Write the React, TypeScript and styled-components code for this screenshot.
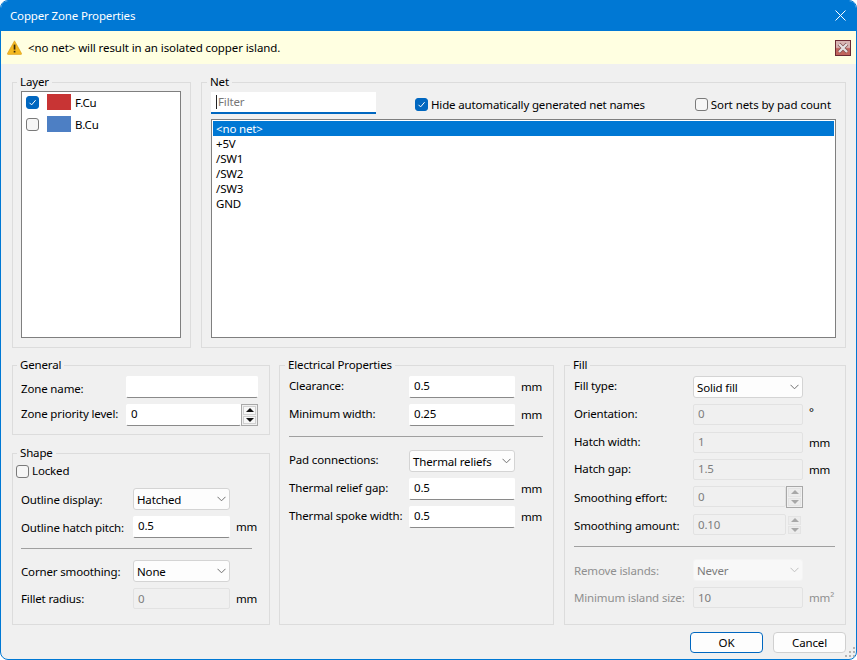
import styled, { createGlobalStyle } from "styled-components";

const NETS = ["<no net>", "+5V", "/SW1", "/SW2", "/SW3", "GND"];

const LAYERS = [
  { id: "F.Cu", color: "#c83434", checked: true },
  { id: "B.Cu", color: "#4d7fc4", checked: false },
];

const GlobalStyle = createGlobalStyle`
  html, body {
    margin: 0;
    background: #fff;
  }
  * {
    box-sizing: border-box;
  }
`;

function Check({ checked }: { checked?: boolean }) {
  return (
    <CheckBox $checked={checked}>
      {checked && (
        <svg width="9" height="9" viewBox="0 0 9 9">
          <path d="M1.5 4.8 L3.6 6.9 L7.6 2.2" fill="none" stroke="#fff" strokeWidth="1" />
        </svg>
      )}
    </CheckBox>
  );
}

function Chevron({ disabled }: { disabled?: boolean }) {
  return (
    <svg width="9" height="6" viewBox="0 0 9 6">
      <path d="M0.5 0.8 L4.5 4.8 L8.5 0.8" fill="none" stroke={disabled ? "#c0c0c0" : "#707070"} strokeWidth="1" />
    </svg>
  );
}

function Dropdown({ value, disabled }: { value: string; disabled?: boolean }) {
  return (
    <Select $disabled={disabled}>
      <span>{value}</span>
      <Chevron disabled={disabled} />
    </Select>
  );
}

function Spinner({ disabled, outlined }: { disabled?: boolean; outlined?: boolean }) {
  return (
    <SpinBox $outlined={outlined}>
      <SpinButton $disabled={disabled}>
        <ArrowUp $disabled={disabled} />
      </SpinButton>
      <SpinButton $disabled={disabled}>
        <ArrowDown $disabled={disabled} />
      </SpinButton>
    </SpinBox>
  );
}

export default function App() {
  return (
    <>
      <GlobalStyle />
      <Window>
        <TitleBar>
          <span>Copper Zone Properties</span>
          <svg width="11" height="11" viewBox="0 0 11 11">
            <path d="M0.5 0.5 L10.5 10.5 M10.5 0.5 L0.5 10.5" stroke="#fff" strokeWidth="1" />
          </svg>
        </TitleBar>
        <MessageBar>
          <svg width="15" height="15" viewBox="0 0 15 15">
            <path d="M7.5 0.8 L14.6 13.6 Q14.8 14.4 14 14.4 L1 14.4 Q0.2 14.4 0.4 13.6 Z" fill="#f4b921" stroke="#d99a1a" strokeWidth="0.6" />
            <rect x="6.7" y="4.6" width="1.7" height="5" fill="#3a2a08" />
            <rect x="6.7" y="10.8" width="1.7" height="1.7" fill="#3a2a08" />
          </svg>
          <MessageText>&lt;no net&gt; will result in an isolated copper island.</MessageText>
          <MessageClose>
            <svg width="14" height="12" viewBox="0 0 14 12">
              <path d="M3 2 L11 10 M11 2 L3 10" stroke="#7a4a4a" strokeWidth="3.6" />
              <path d="M3 2 L11 10 M11 2 L3 10" stroke="#e6e2e2" strokeWidth="2.4" />
            </svg>
          </MessageClose>
        </MessageBar>

        <Content>
          <TopRow>
            <LayerGroup>
              <Legend>Layer</Legend>
              <LayerList>
                {LAYERS.map((layer) => (
                  <LayerRow key={layer.id}>
                    <Check checked={layer.checked} />
                    <Swatch $color={layer.color} />
                    <span>{layer.id}</span>
                  </LayerRow>
                ))}
              </LayerList>
            </LayerGroup>
            <NetGroup>
              <Legend>Net</Legend>
              <NetToolbar>
                <FilterBox>
                  <FilterText>Filter</FilterText>
                </FilterBox>
                <HideOption>
                  <Check checked />
                  <span>Hide automatically generated net names</span>
                </HideOption>
                <SortOption>
                  <Check />
                  <span>Sort nets by pad count</span>
                </SortOption>
              </NetToolbar>
              <NetList>
                {NETS.map((net, i) => (
                  <NetRow key={net} $selected={i === 0}>
                    {net}
                  </NetRow>
                ))}
              </NetList>
            </NetGroup>
          </TopRow>

          <BottomRow>
            <LeftColumn>
              <GeneralGroup>
                <Legend>General</Legend>
                <Form $label={105} $control={132}>
                  <ZoneNameLabel>Zone name:</ZoneNameLabel>
                  <Input readOnly value="" />
                  <Label>Zone priority level:</Label>
                  <SpinField>
                    <Input readOnly value="0" />
                    <Spinner outlined />
                  </SpinField>
                </Form>
              </GeneralGroup>
              <ShapeGroup>
                <Legend>Shape</Legend>
                <LockedRow>
                  <Check />
                  <span>Locked</span>
                </LockedRow>
                <Form $label={112} $control={97} $unit={22}>
                  <Label $low>Outline display:</Label>
                  <Dropdown value="Hatched" />
                  <span />
                  <Label $low>Outline hatch pitch:</Label>
                  <Input readOnly value="0.5" />
                  <Unit>mm</Unit>
                  <Separator $after={5} />
                  <Label $low>Corner smoothing:</Label>
                  <Dropdown value="None" />
                  <span />
                  <Label $low>Fillet radius:</Label>
                  <Input readOnly disabled $low value="0" />
                  <Unit $low>mm</Unit>
                </Form>
              </ShapeGroup>
            </LeftColumn>

            <ElectricalGroup>
              <Legend>Electrical Properties</Legend>
              <Form $label={120} $control={106} $unit={28}>
                <Label>Clearance:</Label>
                <Input readOnly value="0.5" />
                <Unit>mm</Unit>
                <Label>Minimum width:</Label>
                <Input readOnly value="0.25" />
                <Unit>mm</Unit>
                <Separator $after={7} />
                <Label>Pad connections:</Label>
                <Dropdown value="Thermal reliefs" />
                <span />
                <Label>Thermal relief gap:</Label>
                <Input readOnly value="0.5" />
                <Unit>mm</Unit>
                <Label>Thermal spoke width:</Label>
                <Input readOnly value="0.5" />
                <Unit>mm</Unit>
              </Form>
            </ElectricalGroup>

            <FillGroup>
              <Legend>Fill</Legend>
              <Form $label={119} $control={110} $unit={32}>
                <Label>Fill type:</Label>
                <Dropdown value="Solid fill" />
                <span />
                <Label>Orientation:</Label>
                <Input readOnly disabled value="0" />
                <DegreeUnit>°</DegreeUnit>
                <Label>Hatch width:</Label>
                <Input readOnly disabled value="1" />
                <Unit>mm</Unit>
                <Label>Hatch gap:</Label>
                <Input readOnly disabled value="1.5" />
                <Unit>mm</Unit>
                <Label $low>Smoothing effort:</Label>
                <SpinField>
                  <Input readOnly disabled $low value="0" />
                  <Spinner disabled outlined />
                </SpinField>
                <span />
                <Label $low>Smoothing amount:</Label>
                <SpinField>
                  <Input readOnly disabled $low value="0.10" />
                  <Spinner disabled />
                </SpinField>
                <span />
                <Separator $after={6} />
                <Label $disabled $low>Remove islands:</Label>
                <Dropdown value="Never" disabled />
                <span />
                <Label $disabled $low>Minimum island size:</Label>
                <Input readOnly disabled $low value="10" />
                <Unit $disabled>mm²</Unit>
              </Form>
            </FillGroup>
          </BottomRow>

          <ButtonRow>
            <Button $primary>OK</Button>
            <Button>Cancel</Button>
          </ButtonRow>
        </Content>
        <Grip width="11" height="11" viewBox="0 0 11 11">
          <path d="M8 0h2v2H8z M4 4h2v2H4z M8 4h2v2H8z M0 8h2v2H0z M4 8h2v2H4z M8 8h2v2H8z" fill="#b4b4b4" />
        </Grip>
      </Window>
    </>
  );
}

const Window = styled.div`
  position: relative;
  width: 857px;
  height: 660px;
  display: flex;
  flex-direction: column;
  overflow: hidden;
  background: #f0f0f0;
  border: 1px solid #0078d4;
  border-radius: 8px;
  font-family: "Noto Sans", "Open Sans", sans-serif;
  font-size: 11.5px;
  letter-spacing: -0.15px;
  color: #000;
`;

const TitleBar = styled.div`
  height: 30px;
  flex: none;
  display: flex;
  align-items: center;
  justify-content: space-between;
  padding: 0 10px 1px 9px;
  background: #0078d4;
  color: #fff;
`;

const MessageBar = styled.div`
  height: 33px;
  flex: none;
  display: flex;
  align-items: center;
  padding: 0 5px 0 6px;
  background: #ffffe1;
`;

const MessageText = styled.span`
  margin-left: 6px;
  flex: 1;
  letter-spacing: -0.09px;
`;

const MessageClose = styled.div`
  width: 16px;
  height: 16px;
  display: flex;
  align-items: center;
  justify-content: center;
  border: 1px solid #6b2a33;
  background: linear-gradient(#d8b4b2 0 45%, #c0645c 55% 100%);
`;

const Content = styled.div`
  flex: 1;
  display: flex;
  flex-direction: column;
  padding: 10px 10px 0 11px;
`;

const TopRow = styled.div`
  height: 274px;
  display: flex;
  gap: 10px;
`;

const BottomRow = styled.div`
  height: 268px;
  margin-top: 9px;
  display: flex;
  gap: 9px;
`;

const Group = styled.fieldset`
  min-width: 0;
  margin: 0;
  display: flex;
  flex-direction: column;
  border: 1px solid #dcdcdc;
`;

const Legend = styled.legend`
  margin-left: -4px;
  padding: 0 3px;
  line-height: 16px;
`;

const LayerGroup = styled(Group)`
  width: 179px;
  padding: 1px 9px 9px 8px;
`;

const NetGroup = styled(Group)`
  width: 645px;
  padding: 2px 9px 9px;
`;

const LayerList = styled.div`
  flex: 1;
  display: flex;
  flex-direction: column;
  gap: 6px;
  padding: 2px 4px;
  background: #fff;
  border: 1px solid #7f7f7f;
`;

const LayerRow = styled.div`
  height: 16px;
  display: flex;
  align-items: center;
`;

const CheckBox = styled.span<{ $checked?: boolean }>`
  width: 13px;
  height: 13px;
  flex: none;
  display: inline-flex;
  align-items: center;
  justify-content: center;
  border-radius: 3px;
  border: 1px solid ${(props) => (props.$checked ? "#0067c0" : "#7a7a7a")};
  background: ${(props) => (props.$checked ? "#0067c0" : "#f6f6f6")};
`;

const Swatch = styled.span<{ $color: string }>`
  width: 24px;
  height: 16px;
  margin: 0 4px 0 8px;
  background: ${(props) => props.$color};
`;

const NetToolbar = styled.div`
  height: 22px;
  flex: none;
  display: flex;
  align-items: center;
  padding-right: 5px;
  margin-bottom: 5px;
`;

const FilterBox = styled.div`
  width: 165px;
  height: 22px;
  display: flex;
  align-items: center;
  padding-left: 5px;
  background: #fff;
  border-bottom: 2px solid #0067c0;
`;

const FilterText = styled.span`
  padding-left: 1px;
  line-height: 14px;
  color: #777;
  border-left: 1px solid #222;
`;

const HideOption = styled.label`
  margin: 2px 0 0 39px;
  display: flex;
  align-items: center;
  gap: 3px;
`;

const SortOption = styled(HideOption)`
  margin-left: auto;
  letter-spacing: -0.06px;
`;

const NetList = styled.div`
  flex: 1;
  padding: 1px;
  background: #fff;
  border: 1px solid #7f7f7f;
`;

const NetRow = styled.div<{ $selected?: boolean }>`
  height: 15px;
  line-height: 15px;
  padding-left: 3px;
  background: ${(props) => (props.$selected ? "#0078d4" : "transparent")};
  color: ${(props) => (props.$selected ? "#fff" : "#000")};
`;

const LeftColumn = styled.div`
  width: 258px;
  display: flex;
  flex-direction: column;
  gap: 10px;
`;

const GeneralGroup = styled(Group)`
  height: 78px;
  padding: 3px 8px 0;
`;

const ShapeGroup = styled(Group)`
  flex: 1;
  padding: 3px 8px 0;
`;

const ElectricalGroup = styled(Group)`
  width: 275px;
  margin-right: 1px;
  padding: 3px 9px 0;
`;

const FillGroup = styled(Group)`
  width: 282px;
  padding: 3px 9px 0;
`;

const LockedRow = styled.label`
  height: 14px;
  margin: 0 0 10px -5px;
  display: flex;
  align-items: center;
  gap: 3px;

  span:last-child {
    margin-bottom: 2px;
  }
`;

const Form = styled.div<{ $label: number; $control: number; $unit?: number }>`
  display: grid;
  grid-template-columns: ${(props) => props.$label}px ${(props) => props.$control}px ${(props) =>
      props.$unit ? `${props.$unit}px` : ""};
  row-gap: 6px;
`;

const Label = styled.span<{ $disabled?: boolean; $low?: boolean }>`
  align-self: center;
  padding-bottom: ${(props) => (props.$low ? "0" : "3px")};
  white-space: nowrap;
  color: ${(props) => (props.$disabled ? "#8f8f8f" : "#000")};
`;

const ZoneNameLabel = styled(Label)`
  padding: 2px 0 0;
`;

const Unit = styled(Label)`
  padding-left: 6px;
  padding-bottom: ${(props) => (props.$low ? "0" : "1px")};
`;

const DegreeUnit = styled(Unit)`
  padding-bottom: 7px;
`;

const Input = styled.input<{ $low?: boolean }>`
  width: 100%;
  height: 22px;
  min-width: 0;
  padding: 0 4px 3px;
  font: inherit;
  letter-spacing: inherit;
  color: #000;
  outline: none;
  background: #fff;
  border: 1px solid #fff;
  border-bottom-color: #8a8a8a;
  border-radius: 2px;

  &:disabled {
    height: 21px;
    padding-bottom: ${(props) => (props.$low ? "1px" : "3px")};
    color: #7d7d7d;
    background: #f0f0f0;
    border-color: #e2e2e2;
  }
`;

const Select = styled.div<{ $disabled?: boolean }>`
  height: 22px;
  display: flex;
  align-items: center;
  justify-content: space-between;
  padding: 0 3px;
  color: ${(props) => (props.$disabled ? "#7d7d7d" : "#000")};
  background: ${(props) => (props.$disabled ? "#f8f8f8" : "#fdfdfd")};
  border: 1px solid ${(props) => (props.$disabled ? "#f4f4f4" : "#d4d4d4")};
  border-radius: 3px;
`;

const SpinField = styled.div`
  height: 22px;
  display: flex;
`;

const SpinBox = styled.div<{ $outlined?: boolean }>`
  width: 17px;
  height: 22px;
  flex: none;
  display: grid;
  grid-template-rows: 1fr 1fr;
  gap: 1px;
  padding: 1px;
  border: 1px solid ${(props) => (props.$outlined ? "#a8a8a8" : "transparent")};
`;

const SpinButton = styled.div<{ $disabled?: boolean }>`
  display: flex;
  align-items: center;
  justify-content: center;
  background: ${(props) => (props.$disabled ? "#ececec" : "#f7f7f7")};
  border: 1px solid ${(props) => (props.$disabled ? "#e4e4e4" : "#d0d0d0")};
`;

const ArrowUp = styled.span<{ $disabled?: boolean }>`
  width: 0;
  height: 0;
  border-left: 4px solid transparent;
  border-right: 4px solid transparent;
  border-bottom: 4px solid ${(props) => (props.$disabled ? "#a8a8a8" : "#111")};
`;

const ArrowDown = styled.span<{ $disabled?: boolean }>`
  width: 0;
  height: 0;
  border-left: 4px solid transparent;
  border-right: 4px solid transparent;
  border-top: 4px solid ${(props) => (props.$disabled ? "#a8a8a8" : "#111")};
`;

const Separator = styled.div<{ $after: number }>`
  grid-column: 1 / -1;
  height: 1px;
  margin: 4px 0 ${(props) => props.$after}px;
  background: #a0a0a0;
`;

const ButtonRow = styled.div`
  margin-top: 7px;
  display: flex;
  justify-content: flex-end;
  gap: 10px;
`;

const Button = styled.button<{ $primary?: boolean }>`
  width: 73px;
  height: 21px;
  padding: 0;
  font: inherit;
  letter-spacing: inherit;
  color: #000;
  background: #fdfdfd;
  border-radius: 4px;
  border: ${(props) => (props.$primary ? "1.5px solid #0067c0" : "1px solid #d0d0d0")};
`;

const Grip = styled.svg`
  position: absolute;
  right: 0;
  bottom: 1px;
`;
